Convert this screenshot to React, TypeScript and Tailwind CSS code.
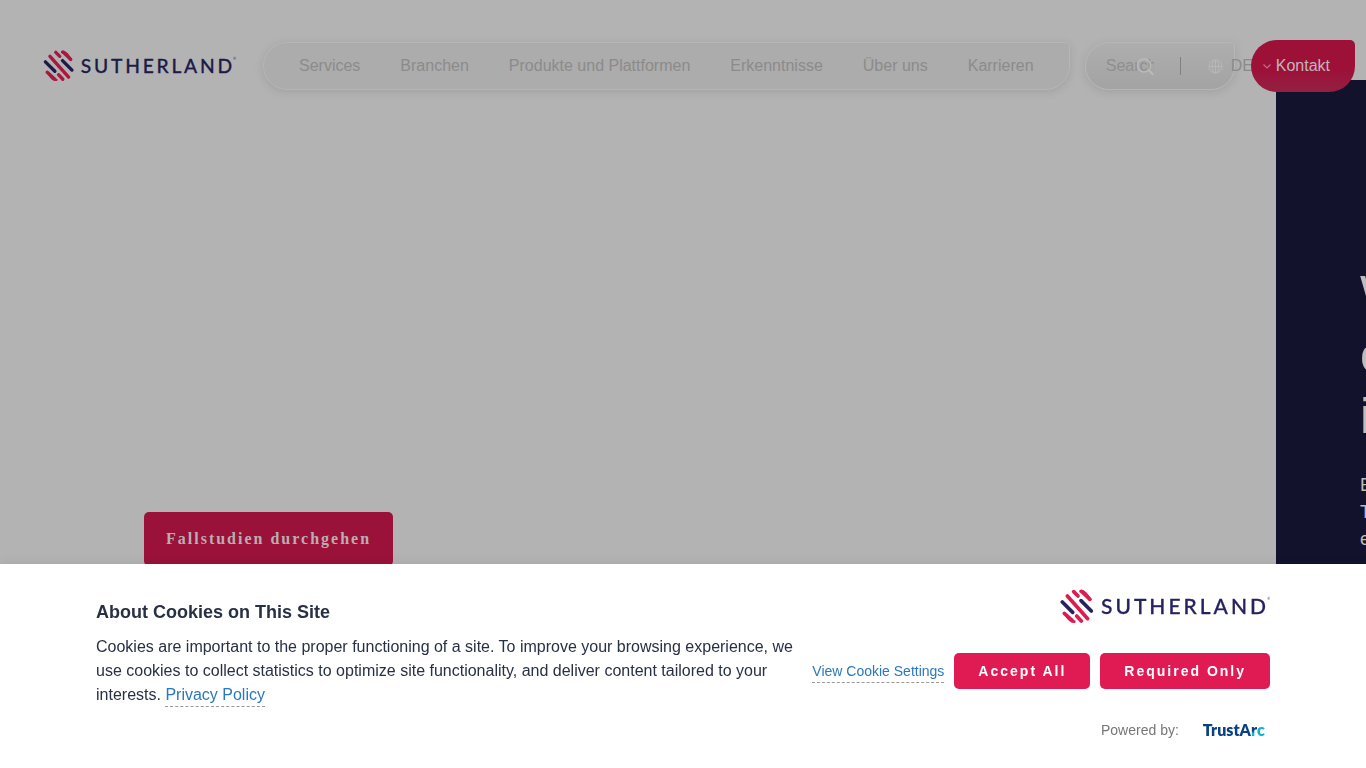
import React, { useState } from "react";

const navItems = ["Services", "Branchen", "Produkte und Plattformen", "Erkenntnisse", "Über uns", "Karrieren"];

function Logo({ className, pink, navy }: { className: string; pink: string; navy: string }) {
  return (
    <svg viewBox="0 0 210 36" className={className} role="img" aria-label="Sutherland">
      <g transform="scale(0.3333) translate(-11 -10)" strokeWidth="11" strokeLinecap="round" fill="none">
        <g className={pink}>
          <path d="M73 20 Q82 20 88 27 L100 44" strokeWidth="9" />
          <path d="M76 20 L101 44" />
          <path d="M52 21 L65 34" />
          <path d="M33 34 L94 102" />
          <path d="M24 86 L48 108" />
          <path d="M30 92 Q40 110 54 111" strokeWidth="8" />
          <path d="M61 94 L75 109" />
        </g>
        <g className={navy}>
          <path d="M18 52 L49 83" />
          <path d="M74 48 L105 79" />
        </g>
      </g>
      <text x="41" y="26" strokeWidth="0.3" strokeLinejoin="round" className={`${navy} fill-current font-['Lato'] text-[21px] font-medium tracking-[3px]`}>SUTHERLAND</text>
      <text x="207" y="12" className={`${navy} fill-current stroke-none font-['Lato'] text-[4px]`}>®</text>
    </svg>
  );
}

function Header() {
  const glass = "h-12 border border-[#b6b6b6] rounded-[28px] rounded-tr-[5px] shadow-[0_2px_10px_rgba(0,0,0,0.1)]";
  return (
    <header className="relative z-10 flex h-20 pt-10 pl-[42px] pr-[11px]">
      <a href="#" className="mt-[9px] mr-[26px] shrink-0">
        <Logo className="h-[33px] w-[195px]" pink="stroke-[#a9163f]" navy="stroke-[#1c1b47] text-[#1c1b47]" />
      </a>
      <nav className={`${glass} mt-[2px] mr-[15px] flex flex-1 items-center gap-10 bg-[#acacac] pl-[35px] whitespace-nowrap`}>
        {navItems.map(item => (
          <a key={item} href="#" className="text-[#8b8b8b]">{item}</a>
        ))}
      </nav>
      <div className={`${glass} mt-[2px] mr-4 flex w-[150px] shrink-0 items-center bg-linear-to-b from-[#aeaeae] to-[#a3a3a3] pl-5`}>
        <div className="relative flex w-12 shrink-0 items-center">
          <input type="text" aria-label="Search" placeholder="Search" className="w-full text-[#8b8b8b] outline-none placeholder:text-[#8f8f8f]" />
          <button aria-label="Suchen" className="absolute right-0 top-1">
            <svg viewBox="0 0 18 18" className="size-[18px] fill-none stroke-[#bababa]" strokeWidth="1.5" strokeLinecap="round">
              <circle cx="8" cy="7.5" r="6.5" />
              <path d="M13 12.5 L16.5 16" strokeWidth="2.2" />
            </svg>
          </button>
        </div>
        <span className="ml-[26px] h-[18px] w-px shrink-0 bg-[#808080]" />
        <button className="ml-[27px] flex shrink-0 items-center gap-2 text-[#8b8b8b]">
          <svg viewBox="0 0 16 16" className="size-[15px] fill-none stroke-[#b9b9b9]" strokeWidth="1">
            <circle cx="8" cy="8" r="7" />
            <ellipse cx="8" cy="8" rx="3.5" ry="7" />
            <path d="M1 8 H15 M8 1 V15" />
          </svg>
          DE
        </button>
      </div>
      <a href="#" className="relative flex h-[52px] shrink-0 items-center rounded-[26px] rounded-tr-[5px] bg-linear-to-b from-[#9d1139] from-60% to-[#931f42] px-[25px] text-[#c2b5b9]">
        <svg viewBox="0 0 8 5" className="absolute top-6 left-3 h-[5px] w-2 fill-none stroke-[#bc6f86]" strokeWidth="1.2">
          <path d="M0.5 0.5 L4 4 L7.5 0.5" />
        </svg>
        Kontakt
      </a>
    </header>
  );
}

function Hero() {
  return (
    <main className="flex h-[560px] overflow-hidden">
      <section className="flex w-full shrink-0 items-end pb-[74px] pl-36 mr-[-90px]">
        <a href="#" className="rounded-[5px] bg-[#9a1239] px-[22px] py-[15px] font-['Liberation_Serif',serif] font-bold tracking-[2px] text-[#b9aeb2]">
          Fallstudien durchgehen
        </a>
      </section>
      <section className="w-full shrink-0 bg-[#12122d] pt-[184px] pl-[84px] text-[#bdbdbd]">
        <h2 className="text-[50px] leading-[61px]">W<br />o<br />i</h2>
        <p className="mt-[25px] text-[18px] leading-[27px]">E<br />T<br />e</p>
      </section>
    </main>
  );
}

function CookieBanner({ onClose }: { onClose: () => void }) {
  const button = "h-9 rounded-[5px] bg-[#e01a52] px-6 text-sm font-bold tracking-[2px] text-white";
  return (
    <div role="dialog" aria-label="Cookies" className="fixed inset-x-0 bottom-0 z-20 flex gap-4 bg-white px-24 pt-6 pb-[27px] shadow-[0_0_12px_rgba(0,0,0,0.08)]">
      <div className="flex-1 pt-3 text-[#283044]">
        <h2 className="text-lg leading-6 font-bold">About Cookies on This Site</h2>
        <p className="mt-[11px]">
          Cookies are important to the proper functioning of a site. To improve your browsing experience, we use cookies to
          collect statistics to optimize site functionality, and deliver content tailored to your interests.{" "}
          <a href="#" className="border-b border-dashed border-[#999] pb-[3px] text-[#2a78bd]">Privacy Policy</a>
        </p>
      </div>
      <div className="flex shrink-0 flex-col items-end">
        <Logo className="h-9 w-[210px]" pink="stroke-[#e01a52]" navy="stroke-[#25235f] text-[#25235f]" />
        <div className="mt-[29px] flex items-center gap-[10px]">
          <a href="#" className="border-b border-dashed border-[#999] text-sm leading-[22px] text-[#2a78bd]">View Cookie Settings</a>
          <button onClick={onClose} className={button}>Accept All</button>
          <button onClick={onClose} className={button}>Required Only</button>
        </div>
        <div className="mt-[30px] flex w-[169px] items-center text-sm text-[#767676]">
          Powered by:
          <a href="#" aria-label="TrustArc" className="ml-6 font-['Lato'] text-base leading-[22px] font-extrabold text-[#0b4180]">
            TrustA
            <span className="bg-linear-to-b from-[#0b4180] from-55% to-[#14b4cc] to-70% bg-clip-text text-transparent">r</span>
            <span className="text-[#14b4cc]">c</span>
          </a>
        </div>
      </div>
    </div>
  );
}

export default function App() {
  const [showCookies, setShowCookies] = useState(true);

  return (
    <div className="min-h-screen overflow-hidden bg-[#b3b3b3] font-['Liberation_Sans',Arial,sans-serif] text-base">
      <Header />
      <Hero />
      {showCookies && <CookieBanner onClose={() => setShowCookies(false)} />}
    </div>
  );
}
